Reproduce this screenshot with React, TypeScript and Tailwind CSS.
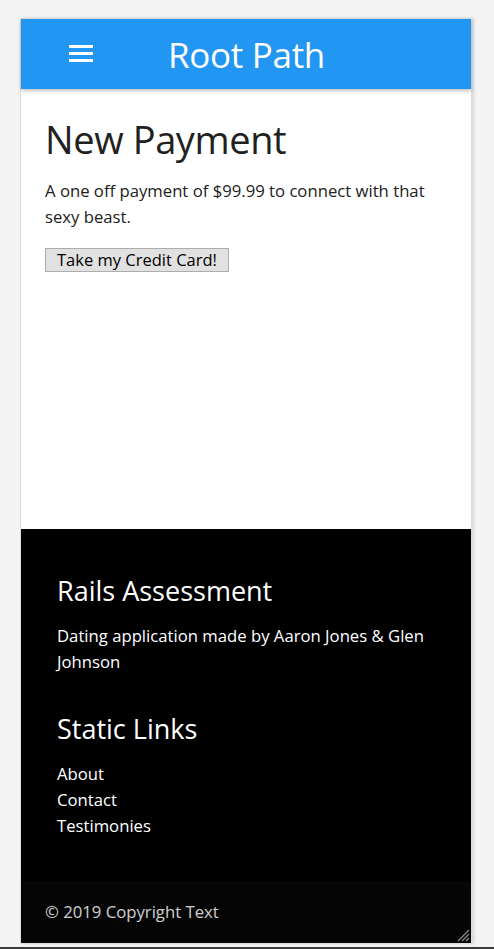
const font = { fontFamily: '"Open Sans", "Noto Sans", sans-serif' };

const links = ["About", "Contact", "Testimonies"];

export default function App() {
  return (
    <div className="h-[949px] bg-[#f4f4f4] flex flex-col overflow-hidden" style={font}>
      <div className="ml-[20px] mt-[18px] w-[452px] border border-[#dcdcdc] bg-white shadow-[2px_0_3px_rgba(0,0,0,0.12)] flex flex-col">
        {/* Navbar */}
        <nav className="h-[70px] bg-[#2196f3] flex items-center relative shadow-[0_2px_4px_rgba(0,0,0,0.25)] z-10">
          <button className="ml-[48px] flex flex-col gap-[4px] mt-[-2px]">
            <span className="block w-[24px] h-[3px] bg-white" />
            <span className="block w-[24px] h-[3px] bg-white" />
            <span className="block w-[24px] h-[3px] bg-white" />
          </button>
          <span className="ml-[75px] text-white text-[35px] leading-none tracking-[-0.3px]">Root Path</span>
        </nav>

        {/* Main */}
        <main className="h-[440px] px-[24px] pt-[28px] text-[#212121]">
          <h1 className="text-[38px] leading-[44px] tracking-[-0.4px]">New Payment</h1>
          <p className="mt-[17px] text-[16.7px] leading-[26px] pr-[20px]">
            A one off payment of $99.99 to connect with that sexy beast.
          </p>
          <button className="mt-[18px] h-[24px] px-[11px] bg-[#e1e1e1] border border-[#adadad] text-[16.5px] leading-none text-black">
            Take my Credit Card!
          </button>
        </main>

        {/* Footer */}
        <footer className="bg-black text-white">
          <div className="px-[36px] pt-[44px] pb-[42px]">
            <h5 className="text-[27px] leading-[36px]">Rails Assessment</h5>
            <p className="mt-[14px] text-[16.7px] leading-[26px]">
              Dating application made by Aaron Jones &amp; Glen Johnson
            </p>
            <h5 className="mt-[36px] text-[27px] leading-[36px]">Static Links</h5>
            <ul className="mt-[14px] text-[16.7px] leading-[26px]">
              {links.map((l) => (
                <li key={l}>{l}</li>
              ))}
            </ul>
          </div>
          <div className="h-[62px] bg-[#050505] px-[24px] flex items-center relative text-[16.7px] text-white/80">
            © 2019 Copyright Text
            <svg className="absolute right-[1px] bottom-[1px]" width="15" height="15" viewBox="0 0 15 15">
              <path d="M14 3 L3 14 M14 7 L7 14 M14 11 L11 14" stroke="#8a8a8a" strokeWidth="1.3" />
            </svg>
          </div>
        </footer>
      </div>
      <div className="mt-auto h-[2px] bg-[#3b3b3b]" />
    </div>
  );
}
